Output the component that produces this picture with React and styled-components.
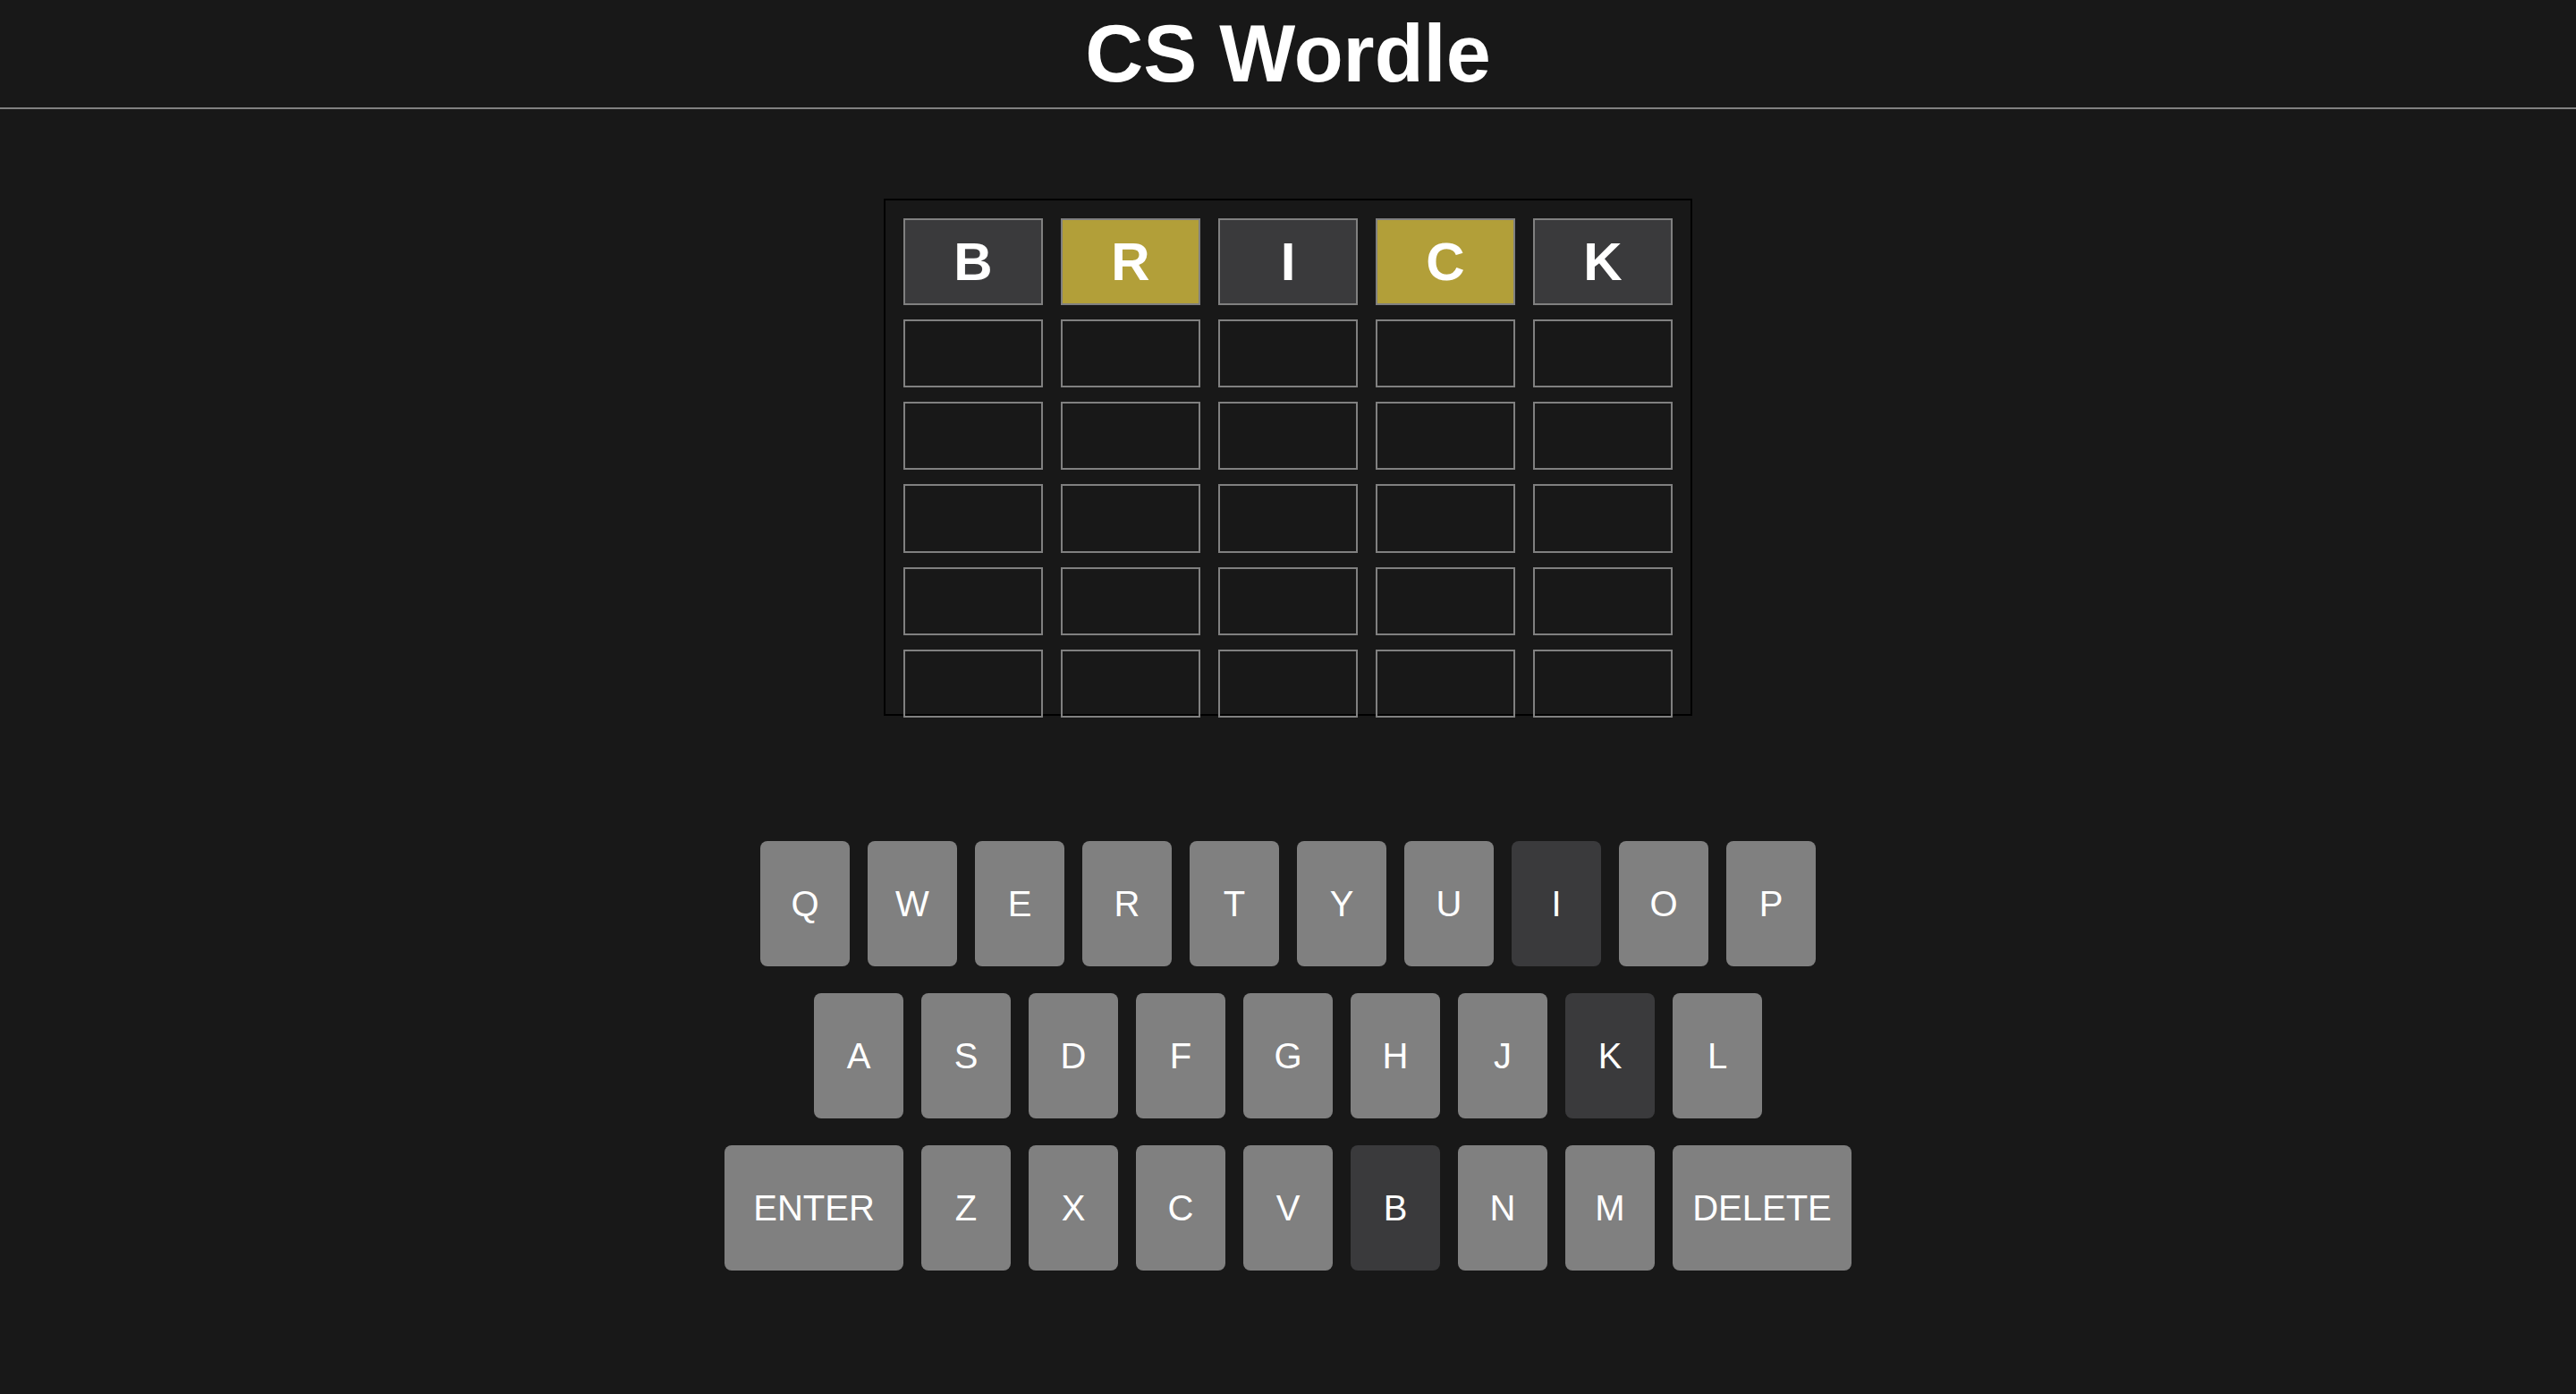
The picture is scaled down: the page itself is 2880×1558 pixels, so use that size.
import React, { useState } from "react";
import styled, { createGlobalStyle } from "styled-components";

const GlobalStyle = createGlobalStyle`
  body {
    margin: 0;
    background: #181818;
    color: #ffffff;
    font-family: "Liberation Sans", Arial, Helvetica, sans-serif;
  }
`;

const fills = {
  absent: "#3a3a3c",
  present: "#b29f39",
  correct: "#538d4e",
};

const Page = styled.div`
  display: flex;
  flex-direction: column;
  min-height: 100vh;
`;

const Header = styled.header`
  height: 120px;
  border-bottom: 2px solid #808080;
  text-align: center;
`;

const Title = styled.h1`
  margin: 0;
  font-size: 90px;
  line-height: 120px;
  font-weight: 700;
`;

const Game = styled.main`
  display: flex;
  flex-direction: column;
  align-items: center;
  gap: 140px;
  padding: 100px 20px;
`;

const Board = styled.section`
  box-sizing: border-box;
  width: 100%;
  max-width: 904px;
  border: 2px solid #000000;
  padding: 20px 20px 0;
`;

const Grid = styled.div`
  display: grid;
  grid-template-columns: repeat(5, 1fr);
  grid-template-rows: 97px repeat(5, 1fr);
  gap: 16px 20px;
  height: 558px;
  margin-bottom: -4px;
`;

const Tile = styled.div`
  display: flex;
  align-items: center;
  justify-content: center;
  border: 2px solid #808080;
  background: ${({ $state }) => fills[$state] || "transparent"};
  font-size: 60px;
  line-height: 72px;
  font-weight: 700;
`;

const Keyboard = styled.section`
  display: flex;
  flex-direction: column;
  gap: 30px;
`;

const KeyRow = styled.div`
  display: flex;
  justify-content: center;
  gap: 20px;
`;

const Key = styled.button`
  width: ${({ $wide }) => ($wide ? "200px" : "100px")};
  height: 140px;
  padding: 0;
  border: 0;
  border-radius: 8px;
  background: ${({ $state }) => fills[$state] || "#808080"};
  color: #ffffff;
  font-family: inherit;
  font-size: 40px;
  cursor: pointer;
`;

const MAX_ROWS = 6;
const WORD_LENGTH = 5;

const submitted = [
  { letter: "B", state: "absent" },
  { letter: "R", state: "present" },
  { letter: "I", state: "absent" },
  { letter: "C", state: "present" },
  { letter: "K", state: "absent" },
];

const keyRows = [
  [..."QWERTYUIOP"],
  [..."ASDFGHJKL"],
  ["ENTER", ..."ZXCVBNM", "DELETE"],
];

const eliminated = new Set(
  submitted.filter((t) => t.state === "absent").map((t) => t.letter)
);

export default function App() {
  const [guess, setGuess] = useState("");

  const press = (key) => {
    if (key === "DELETE") setGuess((g) => g.slice(0, -1));
    else if (key !== "ENTER")
      setGuess((g) => (g.length < WORD_LENGTH ? g + key : g));
  };

  const openTiles = Array.from(
    { length: (MAX_ROWS - 1) * WORD_LENGTH },
    (_, i) => guess[i] || ""
  );

  return (
    <Page>
      <GlobalStyle />
      <Header>
        <Title>CS Wordle</Title>
      </Header>
      <Game>
        <Board aria-label="Board">
          <Grid>
            {submitted.map(({ letter, state }) => (
              <Tile key={letter} $state={state}>
                {letter}
              </Tile>
            ))}
            {openTiles.map((letter, i) => (
              <Tile key={i}>{letter}</Tile>
            ))}
          </Grid>
        </Board>
        <Keyboard aria-label="Keyboard">
          {keyRows.map((keys) => (
            <KeyRow key={keys[0]}>
              {keys.map((key) => (
                <Key
                  key={key}
                  type="button"
                  $wide={key.length > 1}
                  $state={eliminated.has(key) ? "absent" : undefined}
                  onClick={() => press(key)}
                >
                  {key}
                </Key>
              ))}
            </KeyRow>
          ))}
        </Keyboard>
      </Game>
    </Page>
  );
}
